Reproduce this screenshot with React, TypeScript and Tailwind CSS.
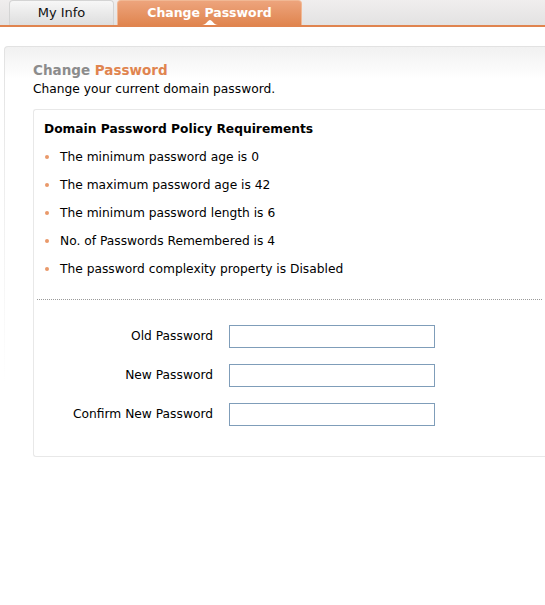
import React from "react"

const policies = [
  "The minimum password age is 0",
  "The maximum password age is 42",
  "The minimum password length is 6",
  "No. of Passwords Remembered is 4",
  "The password complexity property is Disabled",
]

const fields = ["Old Password", "New Password", "Confirm New Password"]

export default function App() {
  return (
    <div className="min-h-[605px] w-[545px] overflow-hidden bg-white text-[12.25px] text-black" style={{ fontFamily: '"DejaVu Sans", Tahoma, sans-serif' }}>
      {/* Tab strip */}
      <div className="flex h-[27px] items-end gap-[3px] border-b-2 border-[#e0844f] bg-gradient-to-b from-[#f0eeee] to-[#e3e2e2] pl-[9px]">
        <button className="h-[25px] w-[105px] rounded-t-[4px] border border-b-0 border-[#d4d4d4] bg-gradient-to-b from-[#f7f7f7] to-[#dedede] text-[13px] text-[#111]">
          My Info
        </button>
        <button className="relative h-[25px] w-[185px] rounded-t-[4px] border border-b-0 border-[#f1b894] bg-gradient-to-b from-[#eda47c] to-[#e0854f] text-[12.5px] font-bold text-white">
          Change Password
          <svg className="absolute bottom-0 left-1/2 -translate-x-1/2" width="16" height="5" viewBox="0 0 16 5">
            <path d="M0 5 C4 5 6 0 8 0 C10 0 12 5 16 5 Z" fill="#fff" />
          </svg>
        </button>
      </div>

      {/* Content panel: gradient wrapper draws the fading left/top edge */}
      <div className="ml-[4px] mt-[19px] rounded-tl-[4px] bg-gradient-to-b from-[#e2e2e2] via-[#f0f0f0] via-30% to-white to-60% pl-px pt-px">
        <div className="rounded-tl-[3px] bg-white bg-gradient-to-b from-[#f1f1f1] to-white bg-[length:100%_32px] bg-no-repeat pl-[28px] pt-[13px]">
          <h2 className="text-[13.5px] font-bold leading-5">
            <span className="text-[#8c8c8c]">Change </span>
            <span className="text-[#e0844f]">Password</span>
          </h2>
          <p className="leading-[18px]">Change your current domain password.</p>

          <div className="mt-[11px] h-[348px] rounded-l-[3px] border border-r-0 border-[#e8e8e8] px-[10px] pt-[9px]">
            <h3 className="font-bold leading-5">Domain Password Policy Requirements</h3>
            <ul className="mt-1">
              {policies.map((p) => (
                <li key={p} className="flex h-7 items-center">
                  <span className="ml-[1px] mr-[11px] h-[4px] w-[4px] rounded-full bg-[#e9996a]" />
                  {p}
                </li>
              ))}
            </ul>

            <div className="-mx-[7px] mt-[16px] border-t border-dotted border-[#9a9a9a]" />

            <div className="mt-[25px] flex flex-col gap-4">
              {fields.map((f) => (
                <div key={f} className="flex items-center">
                  <label className="w-[169px] text-right">{f}</label>
                  <input type="password" className="ml-[16px] h-[23px] w-[206px] border border-[#7f9db9] bg-white outline-none" />
                </div>
              ))}
            </div>
          </div>
          <div className="h-[150px]" />
        </div>
      </div>
    </div>
  )
}
